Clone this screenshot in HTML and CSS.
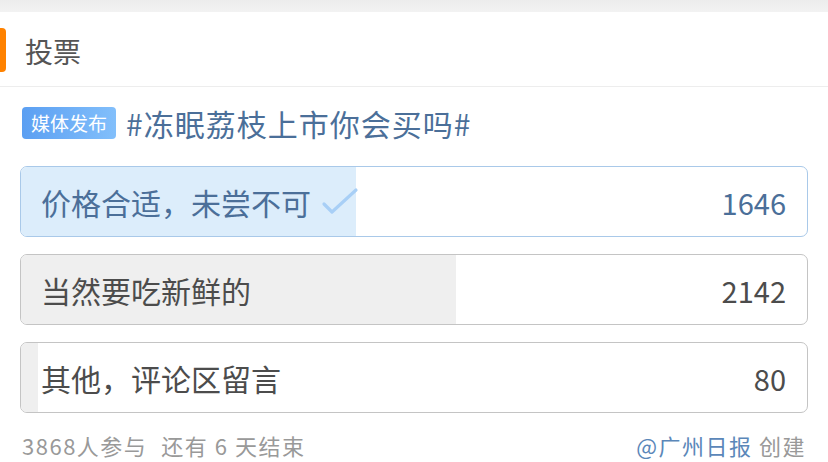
FILE: index.html
```html
<!DOCTYPE html>
<html lang="zh-CN">
<head>
  <meta charset="UTF-8">
  <title>投票</title>
  <link rel="stylesheet" href="styles.css">
</head>
<body>
  <div class="top-strip"></div>
  <div class="card">
    <div class="card-head">
      <span class="head-mark"></span>
      <h2>投票</h2>
    </div>

    <div class="poll">
      <div class="topic">
        <span class="tag">媒体发布</span>
        <span class="topic-text">#冻眠荔枝上市你会买吗#</span>
      </div>

      <div class="option voted">
        <div class="fill" style="width: 42.6%;"></div>
        <span class="label">价格合适，未尝不可
          <svg class="check" width="38" height="30" viewBox="0 0 38 30">
            <path d="M3 17 L11 25 L35 3" fill="none" stroke="#a8cff6" stroke-width="3.2" stroke-linecap="round" stroke-linejoin="round"/>
          </svg>
        </span>
        <span class="count">1646</span>
      </div>

      <div class="option">
        <div class="fill" style="width: 55.4%;"></div>
        <span class="label">当然要吃新鲜的</span>
        <span class="count">2142</span>
      </div>

      <div class="option">
        <div class="fill" style="width: 2.1%;"></div>
        <span class="label">其他，评论区留言</span>
        <span class="count">80</span>
      </div>

      <div class="foot">
        <span class="stats">3868人参与<span class="gap"></span>还有 6 天结束</span>
        <span class="creator"><span class="author">@广州日报</span> 创建</span>
      </div>
    </div>
  </div>
</body>
</html>
```

FILE: styles.css
```css
body {
  margin: 0;
  background: #fff;
  font-family: "Noto Sans CJK SC", "Noto Sans", sans-serif;
  color: #333;
}

.top-strip {
  height: 12px;
  background: linear-gradient(to bottom, #ececec, #f2f2f2);
}

.card {
  background: #fff;
}

.card-head {
  display: flex;
  align-items: center;
  height: 74px;
  border-bottom: 1px solid #ededed;
}

.head-mark {
  width: 6px;
  height: 44px;
  margin-top: 2px;
  background: #ff8200;
  border-radius: 0 4px 4px 0;
}

.card-head h2 {
  margin: 3px 0 0 19px;
  font-size: 28px;
  font-weight: normal;
  color: #555;
  line-height: 1;
}

.poll {
  padding: 20px 20px 0 20px;
}

.topic {
  display: flex;
  align-items: center;
  height: 32px;
  padding-left: 2px;
  margin-bottom: 27px;
}

.tag {
  display: inline-block;
  height: 32px;
  line-height: 32px;
  padding: 0 9px;
  border-radius: 4px;
  background: linear-gradient(to right, #5b9ff2, #82bffb);
  color: #fff;
  font-size: 19px;
}

.topic-text {
  margin-left: 10px;
  font-size: 30px;
  line-height: 32px;
  color: #4b6f99;
  letter-spacing: 1px;
}

.option {
  position: relative;
  display: flex;
  align-items: center;
  justify-content: space-between;
  height: 69px;
  margin-bottom: 17px;
  padding: 0 20px;
  border: 1px solid #c4c4c4;
  border-radius: 7px;
  overflow: hidden;
  font-size: 30px;
  color: #4c4c4c;
}

.option .fill {
  position: absolute;
  left: 0;
  top: 0;
  bottom: 0;
  background: #efefef;
}

.option.voted {
  border-color: #a9c9e9;
  color: #4b6f99;
}

.option.voted .fill {
  background: #dcedfb;
}

.label,
.count {
  position: relative;
  display: flex;
  align-items: center;
}

.count {
  font-size: 29px;
  padding-right: 1px;
}

.check {
  margin-left: 10px;
}

.foot {
  display: flex;
  justify-content: space-between;
  align-items: center;
  margin-top: -1px;
  padding: 0 2px;
  font-size: 22px;
  color: #999;
}

.stats {
  letter-spacing: 1.5px;
}

.gap {
  display: inline-block;
  width: 14px;
}

.creator {
  letter-spacing: 1.5px;
}

.author {
  color: #5b87b9;
}
```
